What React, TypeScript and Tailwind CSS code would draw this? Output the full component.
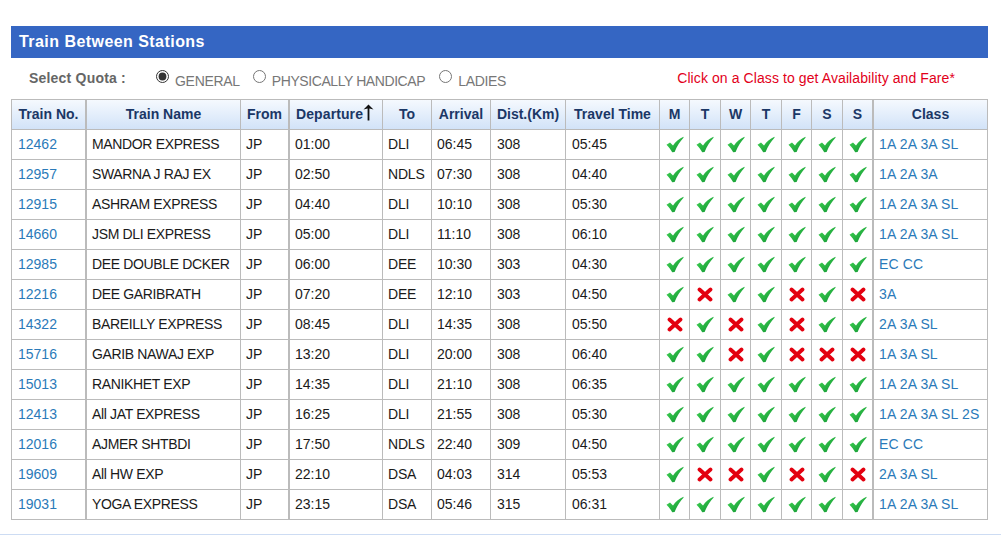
const Check = () => (
  <svg width="18" height="17" viewBox="0 0 18 17" className="mx-auto block">
    <defs>
      <linearGradient id="okGrad" x1="0" y1="0" x2="1" y2="1">
        <stop offset="0" stopColor="#45d955" />
        <stop offset="1" stopColor="#0c8f30" />
      </linearGradient>
    </defs>
    <path d="M0.5 8.8 L4 6.6 L7 9.4 C9.5 6 12.8 2.8 17.5 0.8 L17.5 1.8 C14 5.6 11 10 8.6 16 L6.2 16.3 C4.6 13.4 2.8 10.9 0.5 8.8 Z" fill="url(#okGrad)" />
  </svg>
)

const Cross = () => (
  <svg width="16" height="15" viewBox="0 0 16 15" className="mx-auto block">
    <path d="M2.5 2.5 L13.5 12.5 M13.5 2.5 L2.5 12.5" stroke="#e3000f" strokeWidth="3.8" strokeLinecap="round" fill="none" />
  </svg>
)

const rows = [
  ['12462', 'MANDOR EXPRESS', 'JP', '01:00', 'DLI', '06:45', '308', '05:45', '1111111', '1A 2A 3A SL'],
  ['12957', 'SWARNA J RAJ EX', 'JP', '02:50', 'NDLS', '07:30', '308', '04:40', '1111111', '1A 2A 3A'],
  ['12915', 'ASHRAM EXPRESS', 'JP', '04:40', 'DLI', '10:10', '308', '05:30', '1111111', '1A 2A 3A SL'],
  ['14660', 'JSM DLI EXPRESS', 'JP', '05:00', 'DLI', '11:10', '308', '06:10', '1111111', '1A 2A 3A SL'],
  ['12985', 'DEE DOUBLE DCKER', 'JP', '06:00', 'DEE', '10:30', '303', '04:30', '1111111', 'EC CC'],
  ['12216', 'DEE GARIBRATH', 'JP', '07:20', 'DEE', '12:10', '303', '04:50', '1011010', '3A'],
  ['14322', 'BAREILLY EXPRESS', 'JP', '08:45', 'DLI', '14:35', '308', '05:50', '0101011', '2A 3A SL'],
  ['15716', 'GARIB NAWAJ EXP', 'JP', '13:20', 'DLI', '20:00', '308', '06:40', '1101000', '1A 3A SL'],
  ['15013', 'RANIKHET EXP', 'JP', '14:35', 'DLI', '21:10', '308', '06:35', '1111111', '1A 2A 3A SL'],
  ['12413', 'All JAT EXPRESS', 'JP', '16:25', 'DLI', '21:55', '308', '05:30', '1111111', '1A 2A 3A SL 2S'],
  ['12016', 'AJMER SHTBDI', 'JP', '17:50', 'NDLS', '22:40', '309', '04:50', '1111111', 'EC CC'],
  ['19609', 'All HW EXP', 'JP', '22:10', 'DSA', '04:03', '314', '05:53', '1001010', '2A 3A SL'],
  ['19031', 'YOGA EXPRESS', 'JP', '23:15', 'DSA', '05:46', '315', '06:31', '1111111', '1A 2A 3A SL'],
]

const th = 'h-[30px] p-0 border-r border-b border-[#bbbbbb] text-center text-[14px] font-bold text-[#1b3766] bg-gradient-to-b from-[#f5f9fe] to-[#d2e3f8]'
const td = 'h-[30px] p-0 border-r border-b border-[#bbbbbb] text-[14px] whitespace-nowrap'
const plain = td + ' pl-[5px] text-[#1a1a1a]'
const link = td + ' pl-[6px] text-[#2a7ab9]'
const dayTd = 'h-[30px] p-0 border-r border-b border-[#bbbbbb]'

const App = () => {
  return (
    <div className="h-[537px] overflow-hidden bg-white font-['Liberation_Sans',Arial,sans-serif]">
      <div className="pt-[26px] pl-[11px] pr-[13px]">
        <div className="h-[32px] bg-[#3566c3] pl-[8px] text-[16px] leading-[31px] font-bold tracking-[0.45px] text-white">
          Train Between Stations
        </div>

        <div className="flex h-[41px] items-center text-[14px]">
          <span className="ml-[18px] w-[127px] font-bold tracking-[0.2px] text-[#666666]">Select Quota :</span>
          <label className="flex items-center">
            <input type="radio" name="quota" defaultChecked className="m-0 h-[13px] w-[13px] -translate-y-[2px] accent-[#333333]" />
            <span className="ml-[6px] translate-y-[3px] tracking-[-0.3px] text-[#777777]">GENERAL</span>
          </label>
          <label className="ml-[13px] flex items-center">
            <input type="radio" name="quota" className="m-0 h-[13px] w-[13px] -translate-y-[2px]" />
            <span className="ml-[6px] translate-y-[3px] tracking-[-0.42px] text-[#777777]">PHYSICALLY HANDICAP</span>
          </label>
          <label className="ml-[14px] flex items-center">
            <input type="radio" name="quota" className="m-0 h-[13px] w-[13px] -translate-y-[2px]" />
            <span className="ml-[6px] translate-y-[3px] tracking-[-0.3px] text-[#777777]">LADIES</span>
          </label>
          <span className="ml-auto mr-[33px] tracking-[0.09px] text-[14px] text-[#e2001a]">Click on a Class to get Availability and Fare*</span>
        </div>

        <table className="w-[977px] table-fixed border-separate border-spacing-0 border-t border-[#bbbbbb]">
          <colgroup>
            <col className="w-[76px]" />
            <col className="w-[154px]" />
            <col className="w-[49px]" />
            <col className="w-[93px]" />
            <col className="w-[49px]" />
            <col className="w-[59px]" />
            <col className="w-[75px]" />
            <col className="w-[94px]" />
            <col className="w-[30px]" />
            <col className="w-[31px]" />
            <col className="w-[30px]" />
            <col className="w-[31px]" />
            <col className="w-[30px]" />
            <col className="w-[31px]" />
            <col className="w-[31px]" />
            <col className="w-[114px]" />
          </colgroup>
          <thead>
            <tr>
              <th className={th + ' border-l border-r-2'}>Train No.</th>
              <th className={th}>Train Name</th>
              <th className={th + ' border-r-2'}>From</th>
              <th className={th}>
                <span className="flex items-start pl-[6px]">
                  <span className="tracking-[0.1px]">Departure</span>
                  <svg width="11" height="17" viewBox="0 0 11 17">
                    <path d="M5.5 0.5 L10.5 5.5 L6.4 4.4 L6.4 16.5 L4.6 16.5 L4.6 4.4 L0.5 5.5 Z" fill="#111111" />
                  </svg>
                </span>
              </th>
              <th className={th}>To</th>
              <th className={th}>Arrival</th>
              <th className={th}>Dist.(Km)</th>
              <th className={th}>Travel Time</th>
              <th className={th}>M</th>
              <th className={th}>T</th>
              <th className={th}>W</th>
              <th className={th}>T</th>
              <th className={th}>F</th>
              <th className={th}>S</th>
              <th className={th + ' border-r-2'}>S</th>
              <th className={th}>Class</th>
            </tr>
          </thead>
          <tbody>
            {rows.map((r) => (
              <tr key={r[0]}>
                <td className={link + ' border-l border-r-2'}>{r[0]}</td>
                <td className={plain + ' tracking-[-0.35px]'}>{r[1]}</td>
                <td className={plain + ' border-r-2'}>{r[2]}</td>
                <td className={plain}>{r[3]}</td>
                <td className={plain + ' tracking-[-0.2px]'}>{r[4]}</td>
                <td className={plain}>{r[5]}</td>
                <td className={td + ' pl-[6px] text-[#1a1a1a]'}>{r[6]}</td>
                <td className={td + ' pl-[6px] text-[#1a1a1a]'}>{r[7]}</td>
                {r[8].split('').map((d, i) => (
                  <td key={i} className={dayTd + (i === 6 ? ' border-r-2' : '')}>
                    {d === '1' ? <Check /> : <Cross />}
                  </td>
                ))}
                <td className={td + ' pl-[5px] text-[#2a7ab9] tracking-[0.15px]'}>{r[9]}</td>
              </tr>
            ))}
          </tbody>
        </table>
      </div>
      <div className="mt-[14px] border-t border-[#cddcf3]" />
    </div>
  )
}

export default App
